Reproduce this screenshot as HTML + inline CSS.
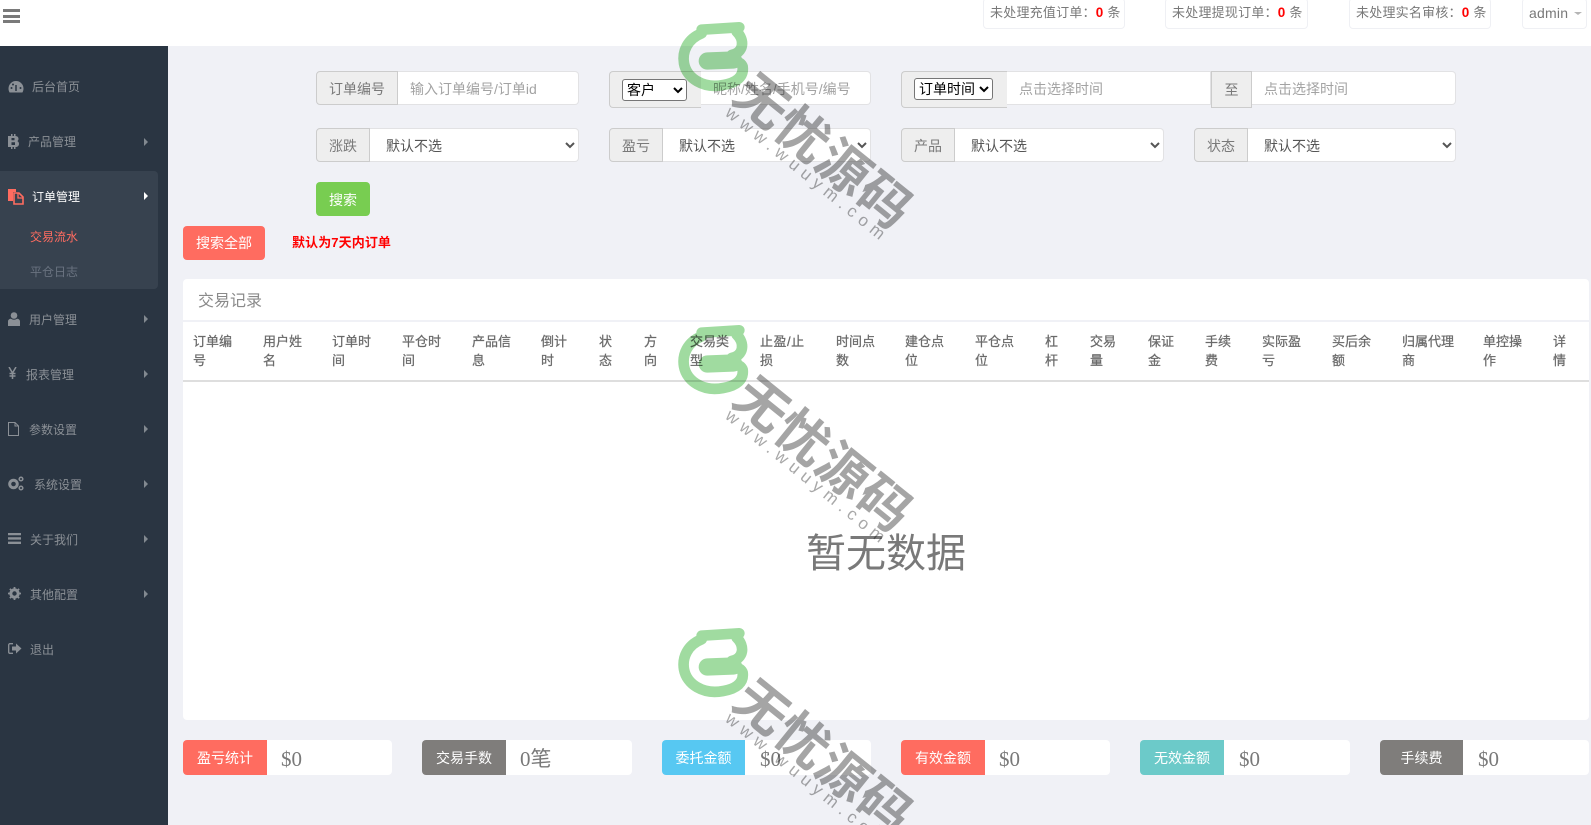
<!DOCTYPE html>
<html lang="zh"><head><meta charset="utf-8"><title>交易流水</title>
<style>
*{box-sizing:border-box}
html,body{margin:0;padding:0;width:1591px;height:825px;overflow:hidden;background:#f0f1f6;font-family:"Liberation Sans","Noto Sans CJK SC",sans-serif;color:#797979}
.a{position:absolute;white-space:nowrap}
#hd{left:0;top:0;width:1591px;height:46px;background:#fff}
.bar{background:#7a7a7a;left:3px;width:17px;height:3px}
.tag{top:-2px;height:31px;background:#fff;border:1px solid #eff0f4;border-radius:4px;font-size:13px;letter-spacing:.22px;line-height:28px;color:#797979;padding-left:6px}
.tag b{color:#f00;font-size:13.500px}
#sb{left:0;top:46px;width:168px;height:779px;background:#2a3542}
#act{left:0;top:171px;width:158px;height:118px;background:#37424f;border-radius:0 4px 4px 0}
.m{font-size:12px;line-height:18px;color:#8b9096}
.ic{position:absolute}
.tri{width:0;height:0;left:144px;border-left:4px solid #828990;border-top:4px solid transparent;border-bottom:4px solid transparent}
.ad{background:#eee;border:1px solid #ccc;color:#797979;font-size:14px;text-align:center;line-height:34px;border-radius:4px 0 0 4px}
.in{background:#fff;border:1px solid #e2e2e4;border-left:0;border-radius:0 4px 4px 0;height:34px;font-size:14px;line-height:34px;color:#a3a3a3;padding-left:12px}
select{font-family:"Liberation Sans","Noto Sans CJK SC",sans-serif}
.se{background:#fff;border:1px solid #e2e2e4;border-left:0;border-radius:0 4px 4px 0;height:34px;font-size:14px;color:#555;padding:2px 0 0 12px;outline:0}
.ss{background:#fff;font-size:14px;color:#000;height:22px;padding:0;border:1px solid #767676;border-radius:3px}
.btn{color:#fff;font-size:14px;text-align:center;line-height:34px;border-radius:4px}
#pn{left:183px;top:279px;width:1406px;height:441px;background:#fff;border-radius:4px}
.th{top:332px;font-size:13px;line-height:19px;color:#6a6a6a;-webkit-text-stroke:.25px #6a6a6a}
.st{top:740px;height:35px;background:#fff;border-radius:4px}
.sl{top:740px;height:35px;color:#fff;font-size:14px;text-align:center;line-height:36px;border-radius:4px 0 0 4px}
.sv{top:745px;font-family:"Liberation Serif","Noto Sans CJK SC",serif;font-size:21px;line-height:28px;color:#797979}
#wm{position:absolute;left:0;top:0;pointer-events:none;mix-blend-mode:multiply}
</style></head><body>
<div class="a" id="hd"></div>
<div class="a bar" style="top:9px"></div><div class="a bar" style="top:15px"></div><div class="a bar" style="top:20px"></div>
<div class="a tag" style="left:983px;width:142px">未处理充值订单：<b>0</b> 条</div>
<div class="a tag" style="left:1165px;width:143px">未处理提现订单：<b>0</b> 条</div>
<div class="a tag" style="left:1349px;width:142px">未处理实名审核：<b>0</b> 条</div>
<div class="a tag" style="left:1522px;width:65px;font-size:14px">admin</div>
<div class="a" style="left:1574px;top:12px;border-top:3px solid #b5b5b5;border-left:4px solid transparent;border-right:4px solid transparent"></div>

<div class="a" id="sb"></div>
<div class="a" id="act"></div>

<svg class="ic" style="left:8px;top:80px" width="16" height="14" viewBox="0 0 16 14"><path d="M8 1a7.5 7.5 0 0 0-7.5 7.5c0 1.500.4 2.900 1.100 4h12.800c.7-1.100 1.100-2.500 1.100-4A7.500 7.500 0 0 0 8 1z" fill="#8b9096"/><circle cx="3.500" cy="8" r="1" fill="#2a3542"/><circle cx="5" cy="4.500" r="1" fill="#2a3542"/><circle cx="12.500" cy="8" r="1" fill="#2a3542"/><path d="M8 11V5" stroke="#2a3542" stroke-width="1.500"/></svg>
<div class="a m" style="left:32px;top:78px">后台首页</div>

<svg class="ic" style="left:8px;top:134px" width="11" height="15" viewBox="0 0 11 15"><path d="M3 0v2H0v11h3v2h1.500v-2H6v2h1.500v-2c2 0 3.500-1 3.500-3.300 0-1.300-.7-2.200-1.700-2.600.8-.5 1.200-1.200 1.200-2.200C10.500 3 9.300 2.200 7.500 2V0H6v2H4.500V0z" fill="#8b9096"/><path d="M3.500 4h3v2.300h-3zM3.500 8.300h3.500v2.700h-3.500z" fill="#2a3542"/></svg>
<div class="a m" style="left:28px;top:133px">产品管理</div>
<div class="a tri" style="top:138px"></div>

<svg class="ic" style="left:8px;top:188px" width="16" height="17" viewBox="0 0 16 17"><path d="M0 1h8v3H5v9H0z" fill="#ff6c60"/><path d="M6 5h5l4 4v7H6z" fill="none" stroke="#ff6c60" stroke-width="1.600"/><path d="M10 5v5h5" fill="none" stroke="#ff6c60" stroke-width="1.300"/></svg>
<div class="a m" style="left:32px;top:188px;color:#fff">订单管理</div>
<div class="a tri" style="top:192px;border-left-color:#fff"></div>
<div class="a m" style="left:30px;top:228px;color:#ff6c60">交易流水</div>
<div class="a m" style="left:30px;top:263px;color:#6a7380">平仓日志</div>

<svg class="ic" style="left:8px;top:312px" width="12" height="14" viewBox="0 0 12 14"><circle cx="6" cy="3.500" r="3.300" fill="#8b9096"/><path d="M0 14V9.500C0 7.800 1.500 6.800 3 6.800c1.800 1.300 4.200 1.300 6 0 1.500 0 3 1 3 2.700V14z" fill="#8b9096"/></svg>
<div class="a m" style="left:29px;top:311px">用户管理</div>
<div class="a tri" style="top:315px"></div>

<svg class="ic" style="left:8px;top:367px" width="9" height="12" viewBox="0 0 9 12"><path d="M1 0l3.500 6L8 0M4.500 6v6M1.500 6.500h6M1.500 9h6" fill="none" stroke="#8b9096" stroke-width="1.500"/></svg>
<div class="a m" style="left:26px;top:366px">报表管理</div>
<div class="a tri" style="top:370px"></div>

<svg class="ic" style="left:8px;top:422px" width="11" height="14" viewBox="0 0 11 14"><path d="M.5.500h6.500l3.500 3.500v9.500H.5zM7 .5V4h3.500" fill="none" stroke="#8b9096"/></svg>
<div class="a m" style="left:29px;top:421px">参数设置</div>
<div class="a tri" style="top:425px"></div>

<svg class="ic" style="left:8px;top:476px" width="16" height="15" viewBox="0 0 16 15"><circle cx="5.500" cy="8" r="3.800" fill="none" stroke="#8b9096" stroke-width="3"/><circle cx="13" cy="3" r="1.800" fill="none" stroke="#8b9096" stroke-width="1.500"/><circle cx="13" cy="12" r="1.800" fill="none" stroke="#8b9096" stroke-width="1.500"/></svg>
<div class="a m" style="left:34px;top:476px">系统设置</div>
<div class="a tri" style="top:480px"></div>

<svg class="ic" style="left:8px;top:533px" width="13" height="11" viewBox="0 0 13 11"><path d="M0 0h13v2.300H0zM0 4.300h13v2.300H0zM0 8.600h13V11H0z" fill="#8b9096"/></svg>
<div class="a m" style="left:30px;top:531px">关于我们</div>
<div class="a tri" style="top:535px"></div>

<svg class="ic" style="left:8px;top:587px" width="13" height="13" viewBox="0 0 13 13"><circle cx="6.500" cy="6.500" r="3.700" fill="none" stroke="#8b9096" stroke-width="3"/><path d="M6.500 0v13M0 6.500h13M1.900 1.900l9.200 9.200M11.100 1.900l-9.200 9.200" stroke="#8b9096" stroke-width="1.800" stroke-dasharray="2.500 8 2.500"/></svg>
<div class="a m" style="left:30px;top:586px">其他配置</div>
<div class="a tri" style="top:590px"></div>

<svg class="ic" style="left:8px;top:643px" width="14" height="11" viewBox="0 0 14 11"><path d="M5 .7H2C1.200.7.700 1.200.7 2v7c0 .8.500 1.300 1.300 1.300h3" fill="none" stroke="#8b9096" stroke-width="1.300"/><path d="M4 3.500h4V.5l5.500 5-5.500 5v-3H4z" fill="#8b9096"/></svg>
<div class="a m" style="left:30px;top:641px">退出</div>

<!-- row 1 -->
<div class="a ad" style="left:316px;top:71px;width:82px;height:34px">订单编号</div>
<div class="a in" style="left:398px;top:71px;width:181px">输入订单编号/订单id</div>

<div class="a ad" style="left:609px;top:71px;width:92px;height:37px;border-right:0"></div>
<select class="a ss" style="left:622px;top:79px;width:65px"><option>客户</option></select>
<div class="a in" style="left:701px;top:71px;width:170px">昵称/姓名/手机号/编号</div>

<div class="a ad" style="left:901px;top:71px;width:106px;height:37px;border-right:0"></div>
<select class="a ss" style="left:914px;top:78px;width:79px"><option>订单时间</option></select>
<div class="a in" style="left:1007px;top:71px;width:204px;border-radius:0">点击选择时间</div>
<div class="a ad" style="left:1211px;top:71px;width:41px;height:37px;border-radius:0;line-height:37px">至</div>
<div class="a in" style="left:1252px;top:71px;width:204px">点击选择时间</div>

<!-- row 2 -->
<div class="a ad" style="left:316px;top:128px;width:54px;height:34px">涨跌</div>
<select class="a se" style="left:370px;top:128px;width:209px"><option>默认不选</option></select>
<div class="a ad" style="left:609px;top:128px;width:54px;height:34px">盈亏</div>
<select class="a se" style="left:663px;top:128px;width:208px"><option>默认不选</option></select>
<div class="a ad" style="left:901px;top:128px;width:54px;height:34px">产品</div>
<select class="a se" style="left:955px;top:128px;width:209px"><option>默认不选</option></select>
<div class="a ad" style="left:1194px;top:128px;width:54px;height:34px">状态</div>
<select class="a se" style="left:1248px;top:128px;width:208px"><option>默认不选</option></select>

<div class="a btn" style="left:316px;top:182px;width:54px;height:34px;line-height:36px;background:#78cd51">搜索</div>
<div class="a btn" style="left:183px;top:226px;width:82px;height:34px;background:#ff6c60">搜索全部</div>
<div class="a" style="left:292px;top:233px;font-size:13px;letter-spacing:.1px;line-height:20px;font-weight:700;color:#f00">默认为7天内订单</div>

<!-- panel -->
<div class="a" id="pn"></div>
<div class="a" style="left:198px;top:290px;font-size:16px;line-height:24px;color:#8a8a8a">交易记录</div>
<div class="a" style="left:183px;top:320px;width:1406px;height:2px;background:#f0f1f6"></div>
<div class="a" style="left:183px;top:380px;width:1406px;height:2px;background:#dedede"></div>
<div class="a th" style="left:193px">订单编<br>号</div>
<div class="a th" style="left:263px">用户姓<br>名</div>
<div class="a th" style="left:332px">订单时<br>间</div>
<div class="a th" style="left:402px">平仓时<br>间</div>
<div class="a th" style="left:472px">产品信<br>息</div>
<div class="a th" style="left:541px">倒计<br>时</div>
<div class="a th" style="left:599px">状<br>态</div>
<div class="a th" style="left:644px">方<br>向</div>
<div class="a th" style="left:690px">交易类<br>型</div>
<div class="a th" style="left:760px;letter-spacing:.5px">止盈/止<br>损</div>
<div class="a th" style="left:836px">时间点<br>数</div>
<div class="a th" style="left:905px">建仓点<br>位</div>
<div class="a th" style="left:975px">平仓点<br>位</div>
<div class="a th" style="left:1045px">杠<br>杆</div>
<div class="a th" style="left:1090px">交易<br>量</div>
<div class="a th" style="left:1148px">保证<br>金</div>
<div class="a th" style="left:1205px">手续<br>费</div>
<div class="a th" style="left:1262px">实际盈<br>亏</div>
<div class="a th" style="left:1332px">买后余<br>额</div>
<div class="a th" style="left:1402px">归属代理<br>商</div>
<div class="a th" style="left:1483px">单控操<br>作</div>
<div class="a th" style="left:1553px">详<br>情</div>
<div class="a" style="left:806px;top:524px;font-size:40px;line-height:60px;color:#797979">暂无数据</div>

<!-- stats -->
<div class="a st" style="left:183px;width:209px"></div>
<div class="a sl" style="left:183px;width:84px;background:#ff6c60">盈亏统计</div>
<div class="a sv" style="left:281px">$0</div>
<div class="a st" style="left:422px;width:210px"></div>
<div class="a sl" style="left:422px;width:84px;background:#7f7d7b">交易手数</div>
<div class="a sv" style="left:520px">0笔</div>
<div class="a st" style="left:662px;width:209px"></div>
<div class="a sl" style="left:662px;width:83px;background:#57c8f2">委托金额</div>
<div class="a sv" style="left:760px">$0</div>
<div class="a st" style="left:901px;width:209px"></div>
<div class="a sl" style="left:901px;width:84px;background:#ff6c60">有效金额</div>
<div class="a sv" style="left:999px">$0</div>
<div class="a st" style="left:1140px;width:210px"></div>
<div class="a sl" style="left:1140px;width:84px;background:#6ccac9">无效金额</div>
<div class="a sv" style="left:1239px">$0</div>
<div class="a st" style="left:1380px;width:209px"></div>
<div class="a sl" style="left:1380px;width:83px;background:#7f7d7b">手续费</div>
<div class="a sv" style="left:1478px">$0</div>

<!-- watermarks -->
<svg id="wm" width="1591" height="825" viewBox="0 0 1591 825">
<defs>
<g id="w">
<g transform="translate(670 15) scale(.3333)" fill="none" stroke="#a0dba0" stroke-linecap="round" stroke-width="32">
<path d="M208 37L95 44"/>
<path d="M95 55C52 72 36 110 42 145C50 190 100 222 160 210C200 203 222 185 218 155C215 145 205 140 190 138"/>
<path d="M200 50C225 75 222 112 185 120"/>
<path d="M112 138L190 135" stroke-width="52"/>
</g>
<text transform="translate(826 148) rotate(39)" text-anchor="middle" dominant-baseline="central" font-family="Noto Sans CJK SC,sans-serif" font-weight="700" font-size="52" letter-spacing=".6" fill="#a5a5a5">无忧源码</text>
<text transform="translate(807.500 175) rotate(39)" text-anchor="middle" dominant-baseline="central" font-family="Liberation Sans,sans-serif" font-size="17" letter-spacing="5.700" fill="#a8a8a8">www.wuuym.com</text>
</g>
</defs>
<use href="#w"/>
<use href="#w" y="303"/>
<use href="#w" y="606"/>
</svg>
</body></html>
